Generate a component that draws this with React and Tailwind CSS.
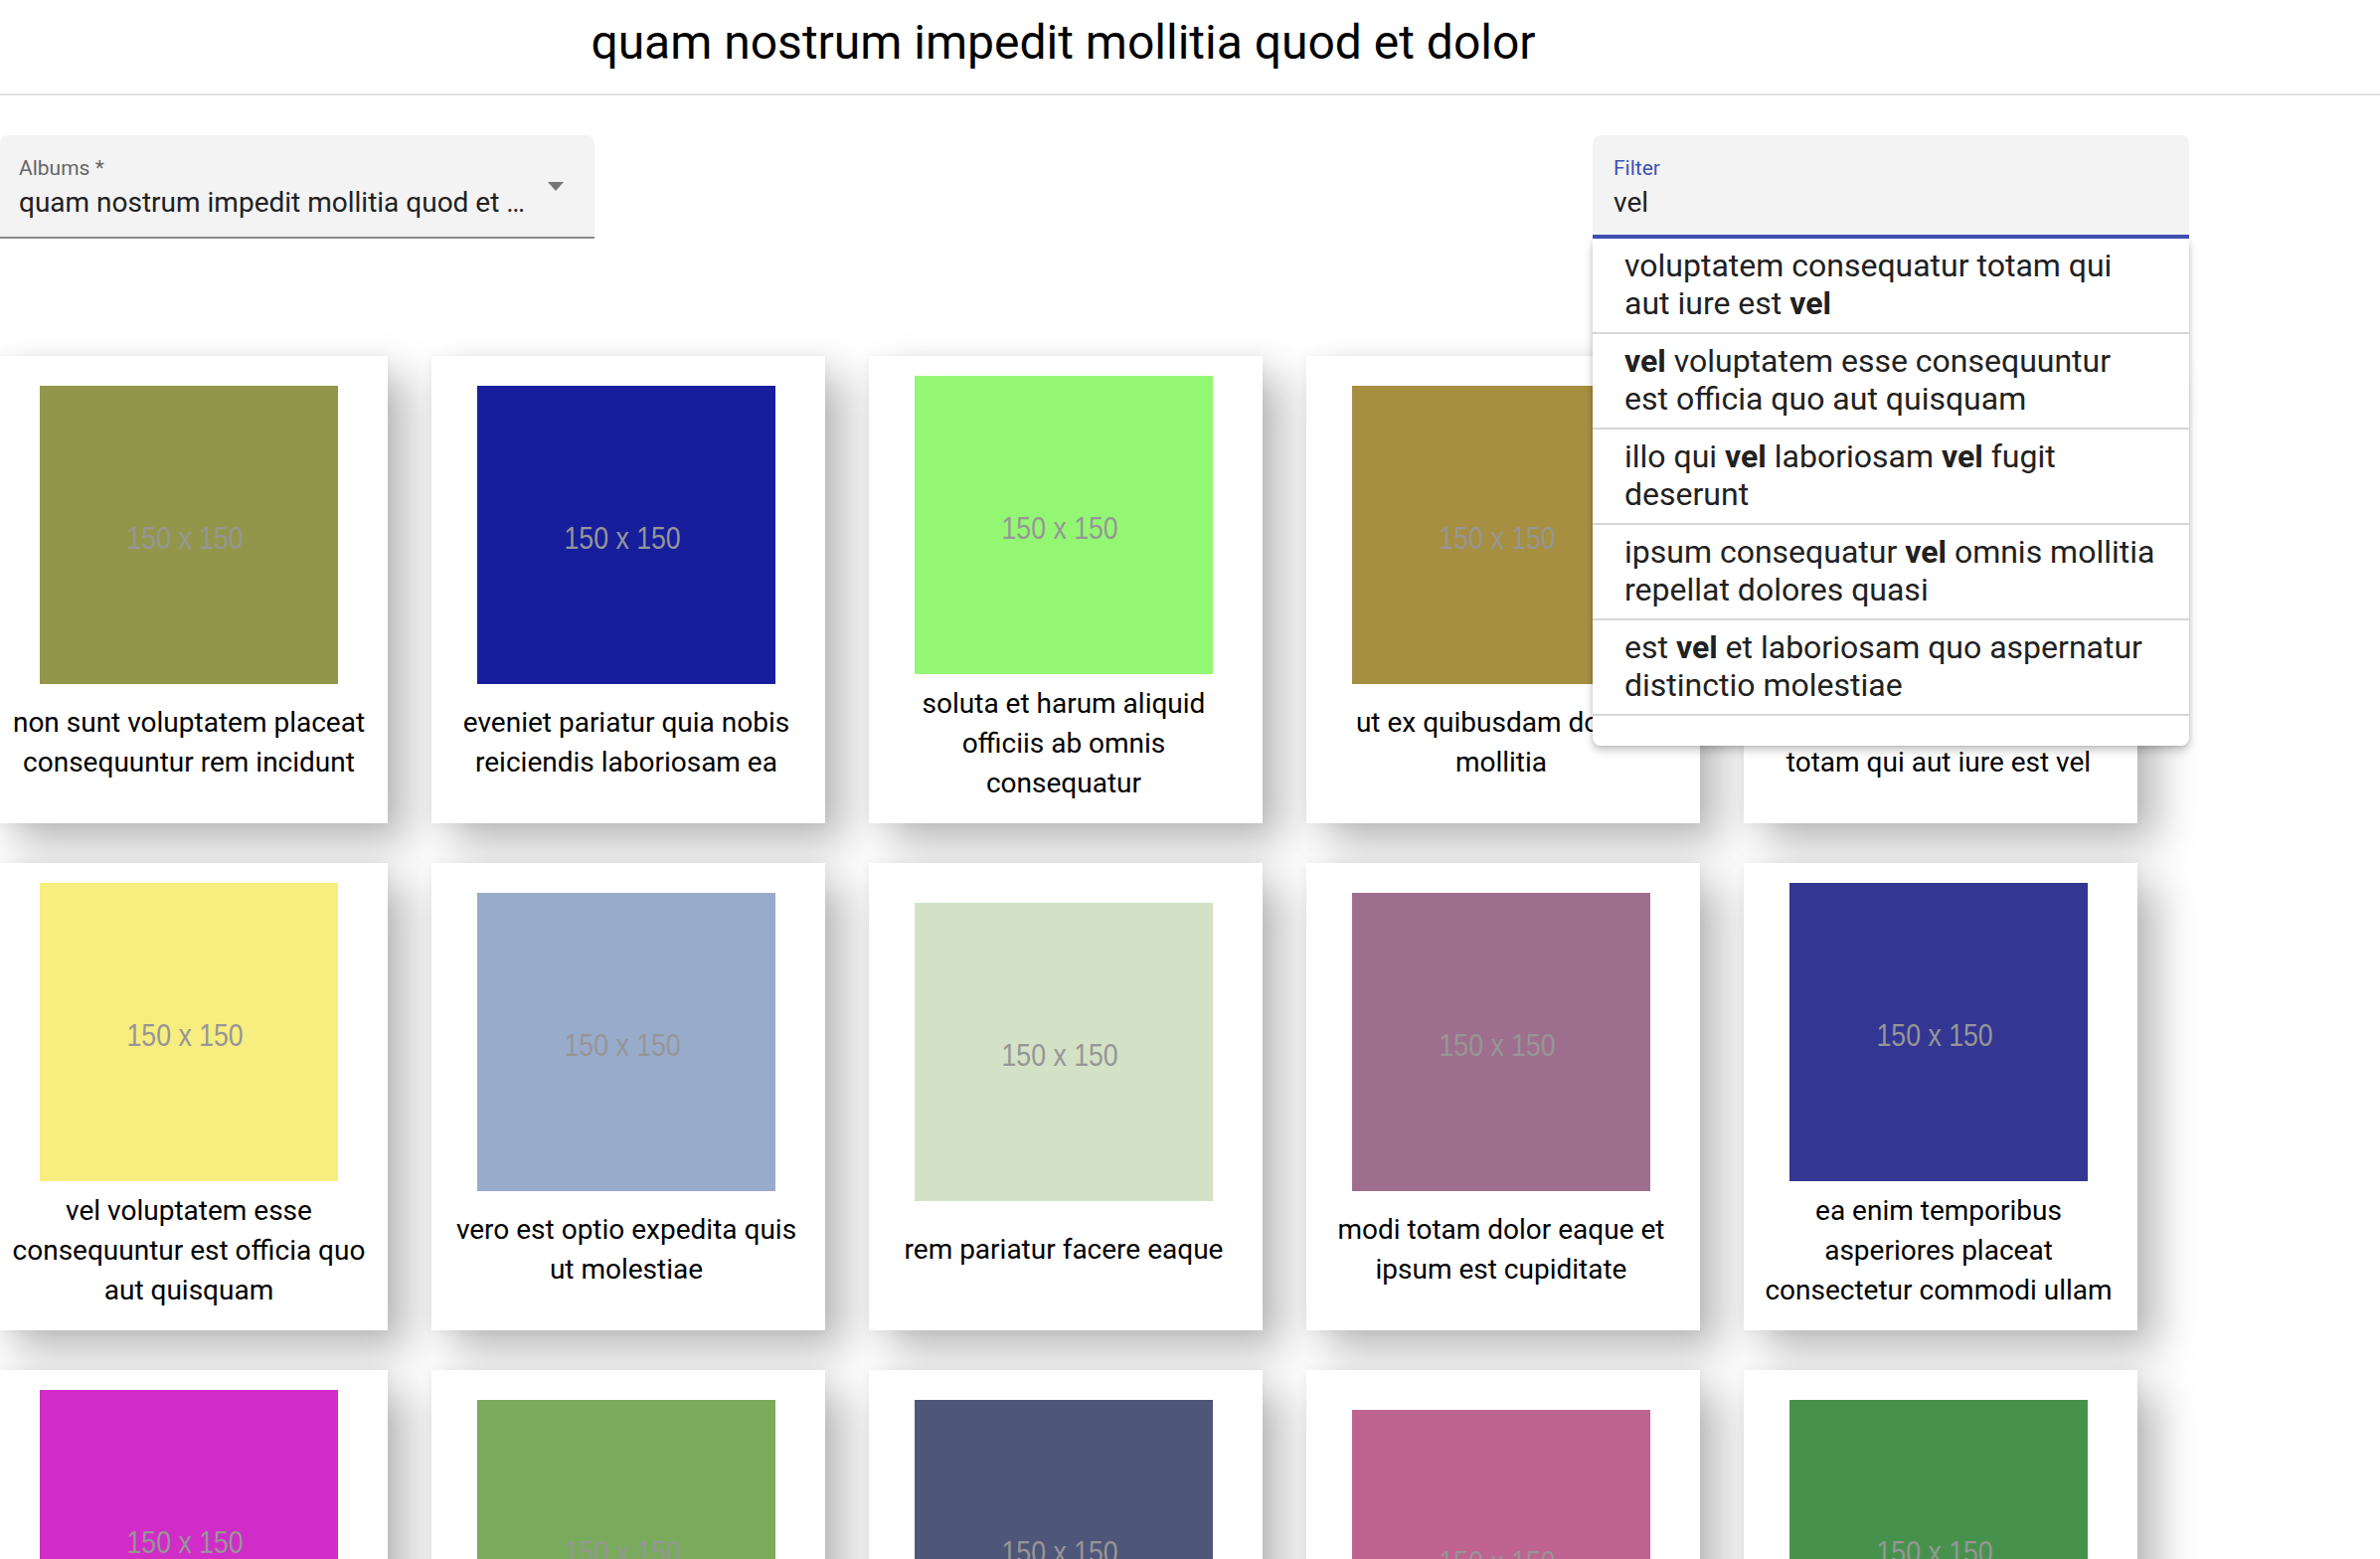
import React from "react";

const padTop = { 1: "pt-[40px]", 2: "pt-[30px]", 3: "pt-[20px]" };
const gapTop = { 1: "mt-[29px]", 2: "mt-[19px]", 3: "mt-[10px]" };

const rows = [
  [
    { bg: "bg-[#92964a]", t: ["non sunt voluptatem placeat", "consequuntur rem incidunt"] },
    { bg: "bg-[#161e9c]", t: ["eveniet pariatur quia nobis", "reiciendis laboriosam ea"] },
    { bg: "bg-[#94f774]", t: ["soluta et harum aliquid", "officiis ab omnis", "consequatur"] },
    { bg: "bg-[#a68f41]", t: ["ut ex quibusdam dolore", "mollitia"] },
    { bg: "bg-[#6a9bc3]", t: ["voluptatem consequatur", "totam qui aut iure est vel"] },
  ],
  [
    { bg: "bg-[#f7ee7f]", t: ["vel voluptatem esse", "consequuntur est officia quo", "aut quisquam"] },
    { bg: "bg-[#98abcb]", t: ["vero est optio expedita quis", "ut molestiae"] },
    { bg: "bg-[#d3e2c6]", t: ["rem pariatur facere eaque"] },
    { bg: "bg-[#9e6f8d]", t: ["modi totam dolor eaque et", "ipsum est cupiditate"] },
    { bg: "bg-[#333692]", t: ["ea enim temporibus", "asperiores placeat", "consectetur commodi ullam"] },
  ],
  [
    { bg: "bg-[#d12cc7]", t: ["quia ducimus nobis", "consequatur aut ex", "distinctio"] },
    { bg: "bg-[#7aab5d]", t: ["dolorem laboriosam vel", "voluptas et aliquam"] },
    { bg: "bg-[#4e5679]", t: ["ullam consequatur ut", "ea maiores"] },
    { bg: "bg-[#bf6390]", t: ["sint et ullam dolor"] },
    { bg: "bg-[#46924d]", t: ["harum aut magni", "iste ad nihil"] },
  ],
];

const options = [
  [["voluptatem consequatur totam qui"], ["aut iure est ", <b key="b">vel</b>]],
  [[<b key="b">vel</b>, " voluptatem esse consequuntur"], ["est officia quo aut quisquam"]],
  [["illo qui ", <b key="a">vel</b>, " laboriosam ", <b key="b">vel</b>, " fugit"], ["deserunt"]],
  [["ipsum consequatur ", <b key="b">vel</b>, " omnis mollitia"], ["repellat dolores quasi"]],
  [["est ", <b key="b">vel</b>, " et laboriosam quo aspernatur"], ["distinctio molestiae"]],
];

function Card({ bg, t }) {
  const n = t.length;
  return (
    <div
      className={`ml-[4px] pr-[4px] bg-white flex flex-col items-center shadow-[20px_20px_40px_rgba(0,0,0,0.28),0_0_12px_rgba(0,0,0,0.05)] ${padTop[n]}`}
    >
      <div className={`w-[300px] h-[300px] shrink-0 flex items-center justify-center ${bg}`}>
        <span className="inline-block font-['Liberation_Sans',Arial,sans-serif] text-[31px] leading-none text-[#969696] scale-x-[0.86] -translate-x-[4px] translate-y-[3px]">
          150 x 150
        </span>
      </div>
      <p className={`${gapTop[n]} text-[28px] leading-[40px] text-center text-black whitespace-nowrap`}>
        {t.map((line, i) => (
          <React.Fragment key={i}>
            {i > 0 && <br />}
            {line}
          </React.Fragment>
        ))}
      </p>
    </div>
  );
}

function AlbumsSelect() {
  return (
    <div className="w-[598px] h-[104px] bg-[#f3f3f3] rounded-t-[8px] border-b-2 border-[#8c8c8c] flex items-center pl-[19px]">
      <div className="flex-1 min-w-0 self-start pt-[21px]">
        <div className="text-[21px] leading-[24px] text-[#666666]">Albums *</div>
        <div className="mt-[6px] text-[28px] leading-[33px] text-[#212121] truncate">
          quam nostrum impedit mollitia quod et dolor
        </div>
      </div>
      <svg viewBox="0 0 16 9" className="ml-[17px] mr-[31px] w-[16px] h-[9px] shrink-0">
        <path d="M0 0 L16 0 L8 9 Z" fill="#757575" />
      </svg>
    </div>
  );
}

function FilterField() {
  return (
    <div className="relative z-20 w-[600px]">
      <div className="h-[104px] bg-[#f3f3f3] rounded-t-[8px] border-b-4 border-[#3f51b5] pl-[21px] pt-[21px]">
        <div className="text-[21px] leading-[24px] text-[#3f51b5]">Filter</div>
        <div className="mt-[6px] text-[28px] leading-[33px] text-[#212121]">vel</div>
      </div>
      <ul className="absolute left-0 top-full w-full bg-white rounded-b-[8px] overflow-hidden shadow-[0_5px_10px_rgba(0,0,0,0.2),0_1px_4px_rgba(0,0,0,0.12)]">
        {options.map((lines, i) => (
          <li
            key={i}
            className="pl-[32px] pr-[16px] pt-[8px] pb-[10px] border-b-2 border-[#d6d6d6] text-[32px] leading-[38px] text-[#212121] whitespace-nowrap"
          >
            {lines.map((l, j) => (
              <React.Fragment key={j}>
                {j > 0 && <br />}
                {l}
              </React.Fragment>
            ))}
          </li>
        ))}
        <li className="h-[30px]" />
      </ul>
    </div>
  );
}

export default function App() {
  return (
    <div className="w-full h-[1568px] overflow-hidden bg-white font-[Roboto,sans-serif] text-black">
      <header className="h-[96px] border-b-2 border-[#e0e0e0] pt-[15px]">
        <h1 className="w-[2139px] text-center text-[48px] leading-[56px] font-normal text-black">
          quam nostrum impedit mollitia quod et dolor
        </h1>
      </header>
      <div className="w-[2202px] mt-[40px] flex justify-between items-start">
        <AlbumsSelect />
        <FilterField />
      </div>
      <div className="mt-[118px] ml-[-10px] grid grid-cols-[repeat(5,400px)] auto-rows-[470px] gap-[40px]">
        {rows.flat().map((c, i) => (
          <Card key={i} {...c} />
        ))}
      </div>
    </div>
  );
}
